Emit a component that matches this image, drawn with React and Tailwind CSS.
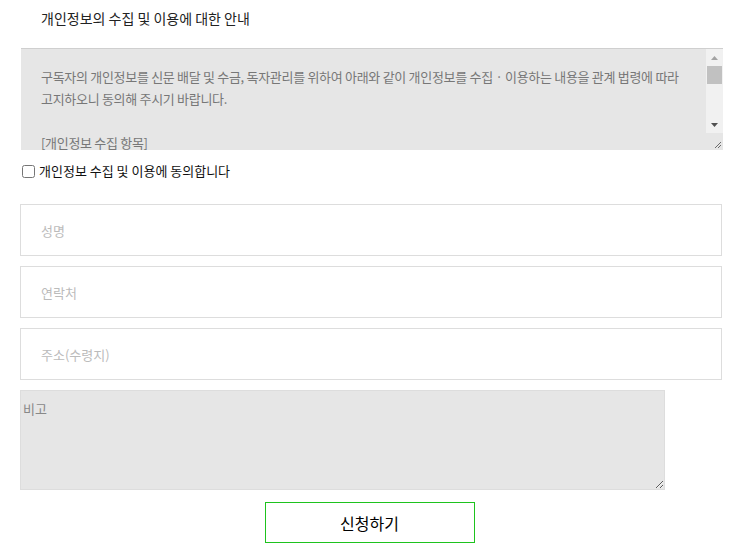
import React from 'react'

const agreeText = `구독자의 개인정보를 신문 배달 및 수금, 독자관리를 위하여 아래와 같이 개인정보를 수집 · 이용하는 내용을 관계 법령에 따라 고지하오니 동의해 주시기 바랍니다.

[개인정보 수집 항목]
- 필수항목 : 성명, 연락처, 주소(수령지)

[개인정보 수집 및 이용 목적]
- 신문 배달 및 수금, 독자관리

[개인정보 보유 및 이용 기간]
- 구독 해지 시까지`

function Grip() {
  return (
    <svg width="17" height="17" viewBox="0 0 17 17">
      <path d="M15 9 L9 15 M15 12 L12 15" stroke="#6b6b6b" strokeWidth="1" />
    </svg>
  )
}

function ScrollColumn() {
  return (
    <div className="w-[17px] shrink-0 flex flex-col">
      <div className="h-[17px] bg-[#f1f1f1] flex items-center justify-center">
        <svg width="7" height="4" viewBox="0 0 7 4">
          <path d="M3.5 0 L7 4 L0 4 Z" fill="#a3a3a3" />
        </svg>
      </div>
      <div className="h-[18px] bg-[#f1f1f1] px-[1px]">
        <div className="h-full bg-[#c1c1c1]" />
      </div>
      <div className="flex-1 bg-[#f1f1f1]" />
      <div className="h-[17px] bg-[#f1f1f1] flex items-center justify-center">
        <svg width="7" height="4" viewBox="0 0 7 4">
          <path d="M0 0 L7 0 L3.5 4 Z" fill="#505050" />
        </svg>
      </div>
      <div className="h-[17px] bg-[#e6e6e6]">
        <Grip />
      </div>
    </div>
  )
}

function App() {
  return (
    <div className="w-[735px] h-[552px] bg-white overflow-hidden font-['Noto_Sans_CJK_KR','Noto_Sans',sans-serif] text-[13px]">
      <div className="pl-[20px] pr-[12px]">
        <div className="h-[36px] flex items-center pl-[21px] text-[#222] text-[14px]">
          개인정보의 수집 및 이용에 대한 안내
        </div>

        <div className="flex ml-[1px] mt-[12px] w-[702px] h-[102px] bg-[#e6e6e6] border-t border-[#cfcfcf]">
          <textarea
            readOnly
            value={agreeText}
            className="flex-1 h-full resize-none bg-transparent px-[20px] pt-[17px] text-[13px] leading-[22px] tracking-[-0.3px] text-[#777] overflow-hidden outline-none"
          />
          <ScrollColumn />
        </div>

        <label className="flex items-center gap-[4px] mt-[14px] ml-[2px] text-[13px] text-[#111]">
          <input type="checkbox" className="w-[13px] h-[13px] m-0" />
          <span className="leading-[14px]">개인정보 수집 및 이용에 동의합니다</span>
        </label>

        <div className="mt-[26px] flex flex-col gap-[10px] w-[702px]">
          <input
            type="text"
            placeholder="성명"
            className="h-[52px] border border-[#ddd] px-[20px] text-[13px] placeholder:text-[#bbb] outline-none"
          />
          <input
            type="text"
            placeholder="연락처"
            className="h-[52px] border border-[#ddd] px-[20px] text-[13px] placeholder:text-[#bbb] outline-none"
          />
          <input
            type="text"
            placeholder="주소(수령지)"
            className="h-[52px] border border-[#ddd] px-[20px] text-[13px] placeholder:text-[#bbb] outline-none"
          />
          <textarea
            placeholder="비고"
            className="w-[645px] h-[100px] bg-[#e6e6e6] border border-[#ddd] px-[2px] pt-[8px] text-[13px] placeholder:text-[#888] outline-none"
          />
        </div>

        <div className="flex justify-center mt-[12px] pr-[4px]">
          <button className="w-[210px] h-[41px] border border-[#1ec31e] bg-white text-[16px] text-black">
            신청하기
          </button>
        </div>
      </div>
    </div>
  )
}

export default App
